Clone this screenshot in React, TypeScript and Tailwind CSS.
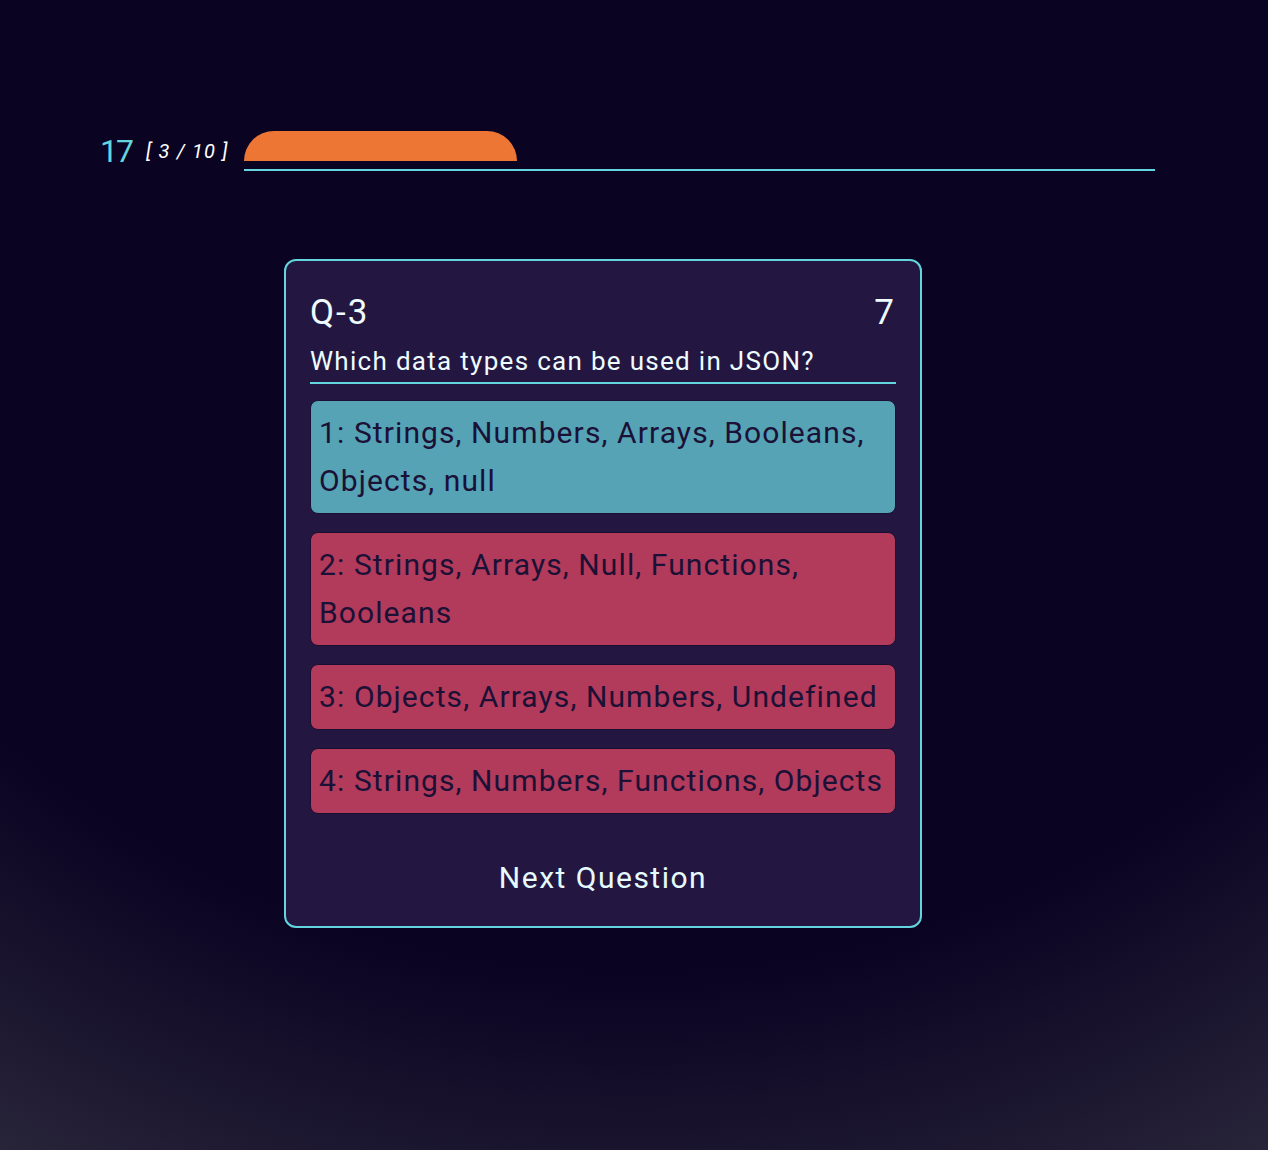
import { useState } from "react";

const options = [
  { id: 1, text: "Strings, Numbers, Arrays, Booleans, Objects, null", correct: true },
  { id: 2, text: "Strings, Arrays, Null, Functions, Booleans", correct: false },
  { id: 3, text: "Objects, Arrays, Numbers, Undefined", correct: false },
  { id: 4, text: "Strings, Numbers, Functions, Objects", correct: false },
];

export default function App() {
  const [score] = useState(7);

  return (
    <div
      className="min-h-screen h-[1150px] w-full overflow-hidden bg-[radial-gradient(circle_at_50%_0%,#0a0322_74%,#282439_100%)] text-white"
      style={{ fontFamily: "Roboto, 'Liberation Sans', sans-serif" }}
    >
      {/* Timer / progress */}
      <div className="flex items-center gap-4 pl-[100px] pt-[131px]">
        <span className="w-[30px] whitespace-nowrap text-[32px] leading-none tracking-[-2px] text-[#63d5de]">
          17
        </span>
        <span className="w-[82px] whitespace-nowrap text-[20px] italic leading-none tracking-[1.2px] text-white">
          [ 3 / 10 ]
        </span>
        <div className="flex w-[911px] flex-col">
          <div className="h-[30px] w-[273px] rounded-t-[30px] bg-[#ee7634]" />
          <div className="mt-[8px] h-[2px] w-full bg-[#63d5de]" />
        </div>
      </div>

      {/* Question card */}
      <div className="ml-[284px] mt-[88px] w-[638px] rounded-xl border-2 border-[#63d5de] bg-[#231742] p-6">
        <div className="mt-1 flex h-[48px] items-center justify-between text-[35px] tracking-[2px] text-[#eefcff]">
          <span>Q-{3}</span>
          <span>{score}</span>
        </div>
        <div className="mb-4 mt-[6px] border-b-2 border-[#63d5de] pb-[3px] text-[26px] leading-[36px] tracking-[1.3px] text-[#eefcff]">
          Which data types can be used in JSON?
        </div>

        <div className="flex flex-col gap-[18px]">
          {options.map((o) => (
            <button
              key={o.id}
              className={
                "rounded-lg border border-[#1a0f33] px-2 py-2 text-left text-[30px] leading-[48px] tracking-[1.1px] text-[#1b1035] " +
                (o.correct ? "bg-[#55a3b5]" : "bg-[#b23a5b]")
              }
            >
              {o.id}: {o.text}
            </button>
          ))}
        </div>

        <div className="mt-10 flex justify-center">
          <button className="text-[30px] leading-[48px] tracking-[1.5px] text-[#e6fbff]">
            Next Question
          </button>
        </div>
      </div>
    </div>
  );
}
